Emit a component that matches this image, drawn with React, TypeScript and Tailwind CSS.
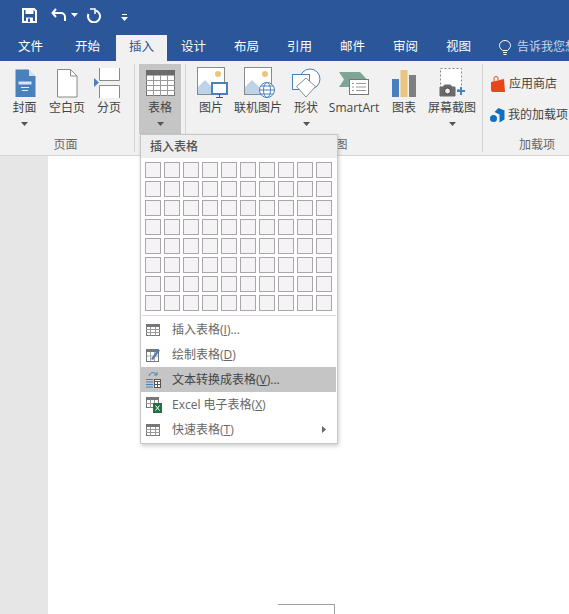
import React from 'react';

const Caret = ({ className = 'fill-[#555]' }: { className?: string }) => (
  <svg width="7" height="4" viewBox="0 0 7 4" className={className}>
    <path d="M0 0h7L3.500 4z" />
  </svg>
);

const CoverIcon = () => (
  <svg width="24" height="30" viewBox="0 0 24 30">
    <path d="M2.500 1.500h13l7 7v20.500h-20z" fill="#4a80bb" />
    <path d="M16 1.500l6.500 6.500H16z" fill="#d5e2f0" />
    <path d="M5.500 13.500h13v3h-13z" fill="#dbe6f2" />
    <path d="M8 19.500h8M9 22.500h6" stroke="#e8eff7" strokeWidth="1" />
  </svg>
);

const BlankIcon = () => (
  <svg width="24" height="30" viewBox="0 0 24 30" fill="#fff" stroke="#8a8a8a">
    <path d="M2.500 1.500h13l6.500 6.500v21h-19.500z" />
    <path d="M15.500 1.500v6.500H22" fill="none" />
  </svg>
);

const BreakIcon = () => (
  <svg width="26" height="30" viewBox="0 0 26 30" className="-ml-[5px]">
    <path d="M5.500 0v12.500h20V0M5.500 30V17.500h20V30" fill="#fff" stroke="#8a8a8a" />
    <path d="M0 10l5 4.500-5 4.500z" fill="#4a80bb" />
  </svg>
);

const TableIcon = () => (
  <svg width="29" height="26" viewBox="0 0 29 26">
    <rect x="0.500" y="0.500" width="28" height="25" fill="#fff" stroke="#777" />
    <rect x="0" y="0" width="29" height="5.500" fill="#6b6b6b" />
    <path d="M0 10.500h29M0 15.500h29M0 20.500h29M7.500 5v21M14.500 5v21M21.500 5v21" stroke="#9a9a9a" />
  </svg>
);

const PictureBase = () => (
  <>
    <rect x="0.500" y="0.500" width="27" height="27" fill="#fff" stroke="#8a8a8a" />
    <circle cx="21" cy="7" r="3" fill="#ecc47d" />
    <path d="M1 27V20l7-7 8 8v6z" fill="#bcd3e8" />
  </>
);

const PictureIcon = () => (
  <svg width="31" height="32" viewBox="0 0 31 32" className="ml-[2px]">
    <PictureBase />
    <rect x="15" y="16" width="15" height="11" fill="#fff" stroke="#4a80bb" strokeWidth="2" />
    <path d="M22.500 27v3M19 30.500h7" stroke="#555" />
  </svg>
);

const OnlineIcon = () => (
  <svg width="31" height="32" viewBox="0 0 31 32" className="ml-[2px]">
    <PictureBase />
    <circle cx="23" cy="23" r="7.500" fill="#fff" stroke="#4a80bb" />
    <ellipse cx="23" cy="23" rx="3.500" ry="7.500" fill="none" stroke="#4a80bb" />
    <path d="M15.500 23h15M17 19h12M17 27h12" stroke="#4a80bb" />
  </svg>
);

const ShapesIcon = () => (
  <svg width="30" height="30" viewBox="0 0 30 30" fill="#fff">
    <circle cx="19" cy="11" r="10" stroke="#4a80bb" />
    <rect x="1.500" y="6.500" width="17" height="15" stroke="#4a80bb" />
    <path d="M15 10l9.500 8.500L15 29 5.500 18.500z" stroke="#8a8a8a" />
  </svg>
);

const SmartArtIcon = () => (
  <svg width="31" height="26" viewBox="0 0 31 26">
    <path d="M0 2h21l7 7.500-7 7.500H0l5-7.500z" fill="#7fa596" />
    <rect x="10.500" y="9.500" width="19" height="15" fill="#fff" stroke="#777" />
    <path d="M13 13.500h2M17 13.500h10M13 17h2M17 17h10M13 20.500h2M17 20.500h10" stroke="#999" />
  </svg>
);

const ChartIcon = () => (
  <svg width="24" height="27" viewBox="0 0 24 27">
    <rect x="0" y="9" width="7" height="18" fill="#4a80bb" />
    <rect x="8.500" y="0" width="7" height="27" fill="#ecc47d" />
    <rect x="17" y="5" width="7" height="22" fill="#808080" />
  </svg>
);

const ScreenshotIcon = () => (
  <svg width="28" height="30" viewBox="0 0 28 30">
    <rect x="2.500" y="0.500" width="21" height="21" fill="#fff" stroke="#888" strokeDasharray="2 2" />
    <path d="M2 19h3l1.500-2h6l1.500 2h3v9H2z" fill="#6a6a6a" stroke="#6a6a6a" />
    <circle cx="9.500" cy="23" r="3" fill="#eee" stroke="#444" />
    <path d="M23 19v8M19 23h8" stroke="#4a80bb" strokeWidth="2" />
  </svg>
);

const StoreIcon = () => (
  <svg width="16" height="17" viewBox="0 0 16 17">
    <path d="M1 6l13-3 1 13H3q-2 0-2-2z" fill="#e8461a" />
    <path d="M4 5V2.500a2 2 0 014 0V4" fill="none" stroke="#e8461a" />
  </svg>
);

const AddinIcon = () => (
  <svg width="15" height="15" viewBox="0 0 15 15">
    <path d="M8.500 0l6 2.500v9l-5 3V6.500L4.500 4z" fill="#106ebe" />
    <circle cx="3.500" cy="10.500" r="3.500" fill="#106ebe" />
  </svg>
);

const SmallTable = () => (
  <svg width="14" height="12" viewBox="0 0 14 12">
    <rect x="0.500" y="0.500" width="13" height="11" fill="#fff" stroke="#777" />
    <rect x="0" y="0" width="14" height="3" fill="#777" />
    <path d="M0 5.500h14M0 8.500h14M4.500 3v9M9.500 3v9" stroke="#999" />
  </svg>
);

const DrawTable = () => (
  <svg width="15" height="15" viewBox="0 0 15 15">
    <rect x="0.500" y="2.500" width="12" height="12" fill="#fff" stroke="#777" />
    <rect x="0" y="2" width="13" height="3" fill="#777" />
    <path d="M4.500 5v9M8.500 5v9M1 9h11" stroke="#aaa" />
    <path d="M5 12l7-10 2 1.500L7 13z" fill="#4a80bb" />
  </svg>
);

const ConvertIcon = () => (
  <svg width="15" height="17" viewBox="0 0 15 17">
    <path d="M3 5a4 4 0 017-2l1 1M11 1v3H8" fill="none" stroke="#4a80bb" />
    <path d="M0 8.500h7M0 11h7M0 13.500h7M0 16h7" stroke="#4a80bb" />
    <rect x="8.500" y="8.500" width="6" height="8" fill="#fff" stroke="#555" />
    <path d="M8 10.500h7M8 13.500h7M11.500 10v6" stroke="#555" />
  </svg>
);

const ExcelIcon = () => (
  <svg width="16" height="16" viewBox="0 0 16 16">
    <rect x="0.500" y="0.500" width="12" height="10" fill="#fff" stroke="#777" />
    <rect x="0" y="0" width="13" height="3" fill="#777" />
    <path d="M4.500 3v8M8.500 3v8M0 6.500h13" stroke="#999" />
    <rect x="7" y="6" width="9" height="10" fill="#217346" />
    <path d="M9.500 8.500l4 5M13.500 8.500l-4 5" stroke="#fff" />
  </svg>
);

const RibbonButton = ({ icon, label, width, caret, active }: {
  icon: React.ReactNode;
  label: string;
  width: string;
  caret?: boolean;
  active?: boolean;
}) => (
  <div className={`${width} ${active ? 'bg-[#c5c5c5]' : ''} h-[70px] shrink-0 flex flex-col items-center`}>
    <div className="h-[30px] mt-[4px] flex items-center justify-center">{icon}</div>
    <div className="text-[12px] leading-[16px] mt-[2px] whitespace-nowrap text-[#444]">{label}</div>
    {caret && <div className="mt-[6px] flex"><Caret /></div>}
  </div>
);

const GroupLabel = ({ children }: { children: React.ReactNode }) => (
  <div className="h-[16px] mt-[3px] text-center text-[12px] leading-[16px] text-[#666]">{children}</div>
);

const menuItems = [
  { icon: <SmallTable />, name: '插入表格(', key: 'I', tail: ')...' },
  { icon: <DrawTable />, name: '绘制表格(', key: 'D', tail: ')' },
  { icon: <ConvertIcon />, name: '文本转换成表格(', key: 'V', tail: ')...', active: true },
  { icon: <ExcelIcon />, name: 'Excel 电子表格(', key: 'X', tail: ')' },
  { icon: <SmallTable />, name: '快速表格(', key: 'T', tail: ')', more: true },
];

const tabs = ['设计', '布局', '引用', '邮件', '审阅', '视图'];

const cells = Array.from({ length: 80 });

export default function App() {
  return (
    <div className="relative w-[569px] h-[614px] overflow-hidden bg-white font-['Open_Sans','Noto_Sans_CJK_SC',sans-serif]">
      {/* title bar */}
      <div className="h-[35px] bg-[#2b579a] flex items-center pl-[22px]">
        <svg width="15" height="15" viewBox="0 0 15 15" className="mt-[-5px]">
          <path d="M1 1h11l2 2v11H1z" fill="none" stroke="#fff" strokeWidth="2" />
          <rect x="3.500" y="1" width="8" height="5" fill="#fff" />
          <rect x="4" y="9.500" width="7" height="4.500" fill="#fff" />
          <rect x="6" y="10.500" width="2" height="3.500" fill="#2b579a" />
        </svg>
        <svg width="16" height="14" viewBox="0 0 16 14" className="ml-[14px] mt-[-5px]">
          <path d="M5 1L1.500 5 5 9M2 5h8a4 4 0 014 4v4" fill="none" stroke="#fff" strokeWidth="2" />
        </svg>
        <div className="ml-[4px] mt-[-5px] flex"><Caret className="fill-white" /></div>
        <svg width="15" height="15" viewBox="0 0 15 15" className="ml-[8px] mt-[-5px]">
          <path d="M4 1h5v5" fill="none" stroke="#fff" strokeWidth="1.500" />
          <path d="M9.500 2.500A6 6 0 1 1 2.500 6" fill="none" stroke="#fff" strokeWidth="2" />
        </svg>
        <svg width="7" height="7" viewBox="0 0 7 7" className="ml-[20px] mt-[-1px] fill-white">
          <path d="M1 0h5v1H1zM0 3h7L3.500 7z" />
        </svg>
      </div>

      {/* tabs */}
      <div className="h-[26px] bg-[#2b579a] flex items-stretch text-[12.5px] text-white">
        <div className="w-[61px] shrink-0 flex items-center justify-center pb-[2px]">文件</div>
        <div className="w-[53px] shrink-0 flex items-center justify-center pb-[2px]">开始</div>
        <div className="w-[51px] ml-[2px] shrink-0 bg-[#f1f1f1] text-[#2b579a] flex items-center justify-center pb-[2px]">插入</div>
        {tabs.map((tab) => (
          <div key={tab} className="w-[53px] shrink-0 flex items-center justify-center pb-[2px]">{tab}</div>
        ))}
        <div className="flex items-center pl-[14px] pb-[2px] whitespace-nowrap text-[12px] text-[#c7d3e6]">
          <svg width="12" height="15" viewBox="0 0 12 15" fill="none" stroke="#fff" className="mr-[6px] shrink-0">
            <path d="M3.500 10.500C1 8.500.5 6.500.5 5.500a5.500 5 0 0111 0c0 1-.5 3-3 5zM4 12.500h4M4.500 14.500h3" />
          </svg>
          告诉我您想要做什么
        </div>
      </div>

      {/* ribbon */}
      <div className="h-[95px] bg-[#f1f1f1] border-b border-[#d4d4d4] flex items-stretch pt-[3px]">
        <div className="w-[135px] h-[88px] shrink-0 border-r border-[#d4d4d4] pl-[3px] pr-[6px]">
          <div className="flex">
            <RibbonButton icon={<CoverIcon />} label="封面" width="w-[43px]" caret />
            <RibbonButton icon={<BlankIcon />} label="空白页" width="w-[42px]" />
            <RibbonButton icon={<BreakIcon />} label="分页" width="w-[42px]" />
          </div>
          <GroupLabel>页面</GroupLabel>
        </div>
        <div className="w-[51px] h-[88px] shrink-0 border-r border-[#d4d4d4] pl-[4px]">
          <RibbonButton icon={<TableIcon />} label="表格" width="w-[42px]" caret active />
        </div>
        <div className="w-[297px] h-[88px] shrink-0 border-r border-[#d4d4d4] pl-[3px]">
          <div className="flex">
            <RibbonButton icon={<PictureIcon />} label="图片" width="w-[44px]" />
            <RibbonButton icon={<OnlineIcon />} label="联机图片" width="w-[50px]" />
            <RibbonButton icon={<ShapesIcon />} label="形状" width="w-[46px]" caret />
            <RibbonButton icon={<SmartArtIcon />} label="SmartArt" width="w-[50px]" />
            <RibbonButton icon={<ChartIcon />} label="图表" width="w-[50px]" />
            <RibbonButton icon={<ScreenshotIcon />} label="屏幕截图" width="w-[46px]" caret />
          </div>
          <GroupLabel>插图</GroupLabel>
        </div>
        <div className="w-[108px] h-[88px] shrink-0">
          <div className="h-[70px] pl-[7px] flex flex-col gap-[13px] pt-[11px] text-[12px] text-[#444]">
            <div className="h-[18px] flex items-center gap-[3px] whitespace-nowrap"><StoreIcon />应用商店</div>
            <div className="h-[18px] flex items-center gap-[3px] whitespace-nowrap"><AddinIcon />我的加载项</div>
          </div>
          <GroupLabel>加载项</GroupLabel>
        </div>
      </div>

      {/* document */}
      <div className="h-[458px] bg-[#e6e6e6] pl-[48px]">
        <div className="h-full bg-white pl-[230px] pt-[448px]">
          <div className="w-[57px] h-[10px] border-t border-r border-[#a0a0a0]" />
        </div>
      </div>

      {/* table dropdown */}
      <div className="absolute left-[140px] top-[134px] w-[198px] bg-white border border-[#c6c6c6] shadow-[1px_2px_4px_rgba(0,0,0,0.2)]">
        <div className="h-[23px] bg-[#eeeeee] pl-[9px] flex items-center text-[12px] font-medium text-[#555]">插入表格</div>
        <div className="grid grid-cols-[repeat(10,16px)] gap-[3px] pl-[4px] pt-[4px] pb-[4px]">
          {cells.map((_, i) => (
            <div key={i} className="h-[16px] bg-[#f6f3f6] border border-[#a8a8a8]" />
          ))}
        </div>
        <div className="mx-[1px] h-[1px] bg-[#d8d8d8]" />
        <div className="pt-[1px] pb-[1px] pr-[1px]">
          {menuItems.map((item) => (
            <div
              key={item.key}
              className={`h-[25px] flex items-center text-[12px] ${item.active ? 'bg-[#c5c5c5] text-[#444]' : 'text-[#666]'}`}
            >
              <div className="w-[31px] pl-[5px] shrink-0 flex items-center">{item.icon}</div>
              <span className="whitespace-nowrap">
                {item.name}<u>{item.key}</u>{item.tail}
              </span>
              {item.more && (
                <svg width="4" height="7" viewBox="0 0 4 7" className="ml-auto mr-[10px] fill-[#666]">
                  <path d="M0 0l4 3.500L0 7z" />
                </svg>
              )}
            </div>
          ))}
        </div>
      </div>
    </div>
  );
}
